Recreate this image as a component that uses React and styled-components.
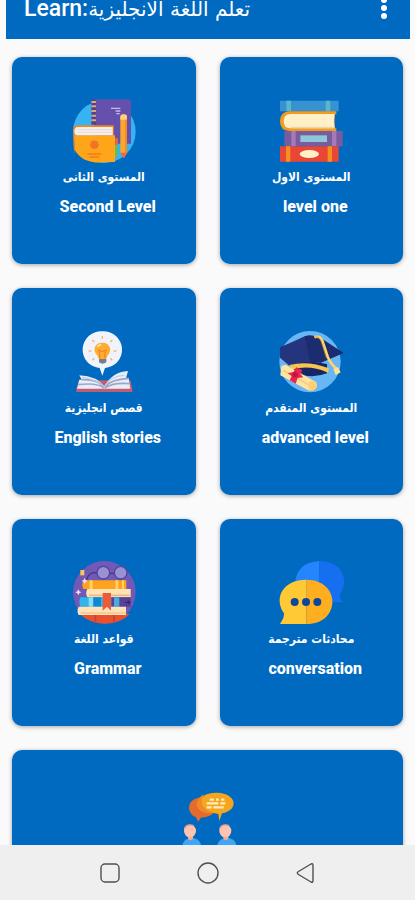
import React from "react";
import styled, { createGlobalStyle } from "styled-components";

const GlobalStyle = createGlobalStyle`
  *, *::before, *::after { box-sizing: border-box; }
  body { margin: 0; background: #fafafa; }
`;

const Screen = styled.div`
  display: flex;
  flex-direction: column;
  height: 100vh;
  overflow: hidden;
  background: #fafafa;
  font-family: Roboto, "DejaVu Sans", sans-serif;
  color: #fff;
`;

const AppBar = styled.header`
  display: flex;
  flex: none;
  align-items: center;
  justify-content: space-between;
  height: 56px;
  margin: -17px 5px 0 6px;
  padding: 0 16px 4px 18px;
  background: #006ac1;
`;

const Title = styled.h1`
  margin: 0;
  font-size: 23px;
  font-weight: 500;
  line-height: 28px;
  white-space: nowrap;
`;

const TitleArabic = styled.span`
  font-family: "DejaVu Sans", sans-serif;
  font-size: 20px;
  font-weight: 400;
`;

const IconButton = styled.button`
  display: flex;
  padding: 0;
  border: 0;
  background: none;
  color: inherit;
  cursor: pointer;
`;

const Content = styled.main`
  flex: 1;
  min-height: 0;
  overflow: hidden;
  padding: 18px 12px 0;
`;

const Grid = styled.div`
  display: grid;
  grid-template-columns: repeat(2, 1fr);
  gap: 24px;
`;

const Card = styled.button`
  display: flex;
  flex-direction: column;
  align-items: center;
  grid-column: ${(p) => (p.$wide ? "1 / -1" : "auto")};
  min-height: 207px;
  padding: 41px 8px 40px;
  border: 0;
  border-radius: 10px;
  background: #006ac1;
  box-shadow: 0 1px 4px rgba(0, 0, 0, 0.35);
  color: inherit;
  font-family: inherit;
  cursor: pointer;
`;

const Picture = styled.svg`
  flex: none;
  width: 64px;
  height: 64px;
  overflow: visible;
`;

const ArabicLabel = styled.span`
  margin-top: 4px;
  font-family: "DejaVu Sans Condensed", "DejaVu Sans", sans-serif;
  font-size: 12px;
  font-weight: 700;
  line-height: 22px;
  white-space: nowrap;
`;

const EnglishLabel = styled.span`
  margin-top: 8px;
  padding-left: 8px;
  font-size: 16px;
  font-weight: 800;
  line-height: 22px;
  white-space: nowrap;
`;

const NavBar = styled.nav`
  display: flex;
  flex: none;
  align-items: center;
  justify-content: center;
  gap: 74px;
  height: 55px;
  background: #efefef;
  color: #505050;
`;

const NavIcon = styled.svg`
  width: 24px;
  height: 24px;
  fill: none;
  stroke: currentColor;
  stroke-width: 1.4;
  stroke-linejoin: round;
`;

function NotebooksPicture() {
  return (
    <Picture viewBox="66 39 192 192" aria-hidden="true">
      <circle cx="163" cy="140" r="94" fill="#36b3f2" />
      <path d="M132 43h104q7 0 7 7v126H132z" fill="#6650ae" />
      <path d="M124 43h14v76h-14z" fill="#51419a" />
      <path d="M124 51h14M124 64h14M124 78h14M124 92h14M124 106h14" stroke="#e0a96e" strokeWidth="6" />
      <path d="M183 70h28M197 78h14M199 86h10" stroke="#c6b8ed" strokeWidth="4" />
      <path d="M188 160h15v58h-15z" fill="#66bc55" />
      <path d="M188 160h15v20h-15z" fill="#ec6142" />
      <path d="M70 134q0-13 14-13h107v30H74v55q-5-18-4-72z" fill="#f58718" />
      <path d="M73 151h122v80h-22Q100 241 74 194z" fill="#ffa519" />
      <path d="M82 126h106v25H82q-9-1-9-12t9-13z" fill="#f5efec" />
      <path d="M82 134h106M82 142h106" stroke="#ddd3d4" strokeWidth="2" />
      <circle cx="133" cy="179" r="12" fill="#f0732a" />
      <path d="M133 165v28M119 179h28M123 169l20 20M143 169l-20 20" stroke="#f0732a" strokeWidth="3" />
      <path d="M112 207h42M118 216h30" stroke="#ef7c21" strokeWidth="4" />
      <path d="M211 96q0-8 10-8t10 8v108l-10 16-10-16z" fill="#fba72e" />
      <path d="M211 96q0-8 10-8t10 8v8h-20z" fill="#ffcf7d" />
      <path d="M225 104h6v100l-6 9z" fill="#ef8d22" />
      <path d="M211 203h20l-10 17z" fill="#f3634b" />
    </Picture>
  );
}

function BookStackPicture() {
  return (
    <Picture viewBox="72 39 192 192" aria-hidden="true">
      <path d="M75 47h176v32H75z" fill="#3692d0" />
      <path d="M94 47h14v32H94zM212 47h14v32h-14z" fill="#5bb5cf" />
      <path d="M104 79h140v9h-5v42h5v8H104q-29 0-29-29t29-30z" fill="#f39b1c" />
      <path d="M106 87h133q-5 22 0 43H106q-20 0-20-21t20-22z" fill="#fff0c8" />
      <path d="M111 130h128v-5H103z" fill="#ead8aa" />
      <path d="M88 138h175v46H88z" fill="#795b9f" />
      <path d="M109 138h13v46h-13zM231 138h13v46h-13z" fill="#a47bb6" />
      <path d="M136 151h80v20h-80z" fill="#8cc8d5" />
      <path d="M75 184h176v46H75z" fill="#e94635" />
      <path d="M93 184h13v46H93zM218 184h13v46h-13z" fill="#f3911e" />
      <ellipse cx="163" cy="207" rx="29" ry="12" fill="#fff0c8" />
    </Picture>
  );
}

function StoriesPicture() {
  return (
    <Picture viewBox="81 27 192 192" aria-hidden="true">
      <path d="M172 34a55 55 0 0 1 8 110l-8 23-8-23a55 55 0 0 1 8-110z" fill="#f0f4fa" />
      <path d="M172 48v8M142 60l6 6M202 60l-6 6M131 93h8M206 93h8M142 121l6-6M202 121l-6-6" stroke="#f6b26d" strokeWidth="4" />
      <path d="M172 68c-25 0-29 24-16 37l6 12h21l6-12c13-13 7-37-17-37z" fill="#ffad2f" />
      <path d="M164 116q3-18-4-26l12 5 12-5q-7 8-4 26" fill="none" stroke="#ed7d20" strokeWidth="3" />
      <path d="M157 81q4-7 12-7" fill="none" stroke="#ffe2a2" strokeWidth="5" />
      <path d="M162 117h22v10q-11 8-22 0z" fill="#747f93" />
      <path d="M94 206l8-25h154l6 25v10H94z" fill="#c05d70" />
      <path d="M103 166q53 3 75 33 24-43 71-46l-6 22h8l5 31H96l7-27h7z" fill="#e8edf7" />
      <path d="M110 179q49-2 68 22 20-23 73-26M100 194q59-7 78 11 25-19 76-14" fill="none" stroke="#9ba8cb" strokeWidth="5" />
      <path d="M112 172q45 7 66 28 21-33 60-34M178 198v9" fill="none" stroke="#c1cadd" strokeWidth="3" />
    </Picture>
  );
}

function GraduationPicture() {
  return (
    <Picture viewBox="87 27 192 192" aria-hidden="true">
      <circle cx="180" cy="125" r="92" fill="#68b6f4" />
      <path d="M113 112l118 20v28q-48 19-97-3z" fill="#172664" />
      <path d="M90 82q43-18 74-33 18-6 44 3l72 47-68 29q-51-6-94 9L90 113z" fill="#25357d" />
      <path d="M164 49q18-6 44 3l72 47-68 29-32-4z" fill="#1c2c70" />
      <path d="M118 135q56-15 119 10l-3 13q-57-25-108-9z" fill="#f8c552" />
      <path d="M193 52q20-8 27 19l13 39q7 20 30 40" fill="none" stroke="#ffd665" strokeWidth="8" />
      <path d="M194 51q16-3 20 15l15 49" fill="none" stroke="#b88c40" strokeWidth="2" />
      <path d="M250 146l14-4 8 15-15 8z" fill="#ffe390" />
      <path d="M94 138l13-4 91 52q9 15-8 25l-13 1-86-46z" fill="#ffe3a1" />
      <path d="M100 151l82 47" stroke="#f6c676" strokeWidth="4" />
      <ellipse cx="187" cy="197" rx="12" ry="15" fill="#ffcf6d" />
      <path d="M139 142l18 8-6 13 9 9-17 2-6 17-18-10 6-13-12-8 17-4z" fill="#e72650" />
      <circle cx="135" cy="164" r="8" fill="#bd183f" />
      <circle cx="154" cy="163" r="3" fill="#ff7284" />
    </Picture>
  );
}

function GrammarPicture() {
  return (
    <Picture viewBox="66 30 192 192" aria-hidden="true">
      <circle cx="163" cy="127" r="94" fill="#7259b6" />
      <path d="M89 192h150q-27 29-73 29t-77-29z" fill="#e9502e" />
      <path d="M136 195v24M192 195v22" stroke="#c84234" strokeWidth="5" />
      <path d="M109 90q12-31 36-19M178 70h16" fill="none" stroke="#423786" strokeWidth="4" />
      <circle cx="160" cy="68" r="19" fill="#9a91d5" stroke="#50449c" strokeWidth="4" />
      <circle cx="212" cy="68" r="19" fill="#9a91d5" stroke="#50449c" strokeWidth="4" />
      <path d="M100 91h129v26H100q-6-13 0-26z" fill="#ffa31e" />
      <path d="M119 91h9v26h-9zM196 91h9v26h-9zM216 91h6v26h-6z" fill="#ffd165" />
      <path d="M112 117h130v25H112q-7-13 0-25z" fill="#ffe3b7" />
      <path d="M117 136h122" stroke="#e9bc7e" strokeWidth="5" />
      <path d="M91 142h105v28H91q-6-14 0-28z" fill="#2eb5ec" />
      <path d="M116 142h14v28h-14z" fill="#8adaf4" />
      <path d="M130 142h23v28h-23z" fill="#0e88d5" />
      <path d="M184 142h58v28h-58z" fill="#554197" />
      <path d="M192 142h16v28h-16z" fill="#4ba9e3" />
      <path d="M226 157h14M234 151l6 6-6 6" fill="none" stroke="#292157" strokeWidth="3" />
      <path d="M86 170h142v25H86q-7-12 0-25z" fill="#ffe3b7" />
      <path d="M91 189h136" stroke="#efc68a" strokeWidth="5" />
      <path d="M158 129h25v53l-12-12-13 12z" fill="#ec5b36" />
      <path d="M91 60h12v16H91z" fill="#ffc45a" />
      <path d="M85 118l3 6 6 3-6 3-3 6-3-6-6-3 6-3zM104 84l3 6 6 3-6 3-3 6-3-6-6-3 6-3z" fill="#f2ddff" />
    </Picture>
  );
}

function ConversationPicture() {
  return (
    <Picture viewBox="72 30 192 192" aria-hidden="true">
      <path d="M193 33v121h-43q-31-22-30-54 5-63 73-67z" fill="#2386ff" />
      <path d="M193 33c73 0 90 63 61 101 0 12 5 18 11 23h-72z" fill="#166ff0" />
      <path d="M154 89c-70 0-99 55-67 101 1 12-5 21-12 32h79z" fill="#ffc936" />
      <path d="M154 89c104 0 104 133 0 133z" fill="#ffae20" />
      <circle cx="119" cy="156" r="12" fill="#0e4799" />
      <circle cx="153" cy="156" r="12" fill="#0e4799" />
      <circle cx="187" cy="156" r="12" fill="#0e4799" />
    </Picture>
  );
}

function DialoguePicture() {
  return (
    <Picture viewBox="78 33 192 192" aria-hidden="true">
      <path d="M166 52c-54-6-62 45-29 59l8 14 7-12q34-2 42-20z" fill="#e56b2c" />
      <path d="M202 38c-65-2-70 50-12 61l15 3 3 21 8-23c53-10 44-60-14-62z" fill="#f5a51e" />
      <path d="M151 50q-27 31 13 48 16 3 25 0-50-15-27-56z" fill="#ef8825" />
      <path d="M179 59h13M198 59h8M213 59h10M170 70h35M211 70h15M170 82h15M190 82h31" stroke="#ffedbd" strokeWidth="7" />
      <path d="M96 205q1-30 29-32 28 2 30 32zM200 205q2-30 31-32 28 2 30 32z" fill="#42a5f3" />
      <path d="M114 164h15v13q-8 7-15 0zM220 164h15v13q-8 7-15 0z" fill="#f6a995" />
      <ellipse cx="120" cy="153" rx="18" ry="19" fill="#ffc3af" />
      <ellipse cx="226" cy="153" rx="18" ry="19" fill="#ffc3af" />
      <path d="M103 147q7-17 28-10M209 147q7-17 28-10" fill="none" stroke="#eea08d" strokeWidth="4" />
    </Picture>
  );
}

const lessons = [
  { arabic: "المستوى الثانى", english: "Second Level", Art: NotebooksPicture },
  { arabic: "المستوى الاول", english: "level one", Art: BookStackPicture },
  { arabic: "قصص انجليزية", english: "English stories", Art: StoriesPicture },
  { arabic: "المستوى المتقدم", english: "advanced level", Art: GraduationPicture },
  { arabic: "قواعد اللغة", english: "Grammar", Art: GrammarPicture },
  { arabic: "محادثات مترجمة", english: "conversation", Art: ConversationPicture },
];

export default function App() {
  return (
    <Screen>
      <GlobalStyle />
      <AppBar>
        <Title>
          Learn:<TitleArabic lang="ar">تعلم اللغة الانجليزية</TitleArabic>
        </Title>
        <IconButton aria-label="More options">
          <svg width="20" height="24" viewBox="0 0 20 24" fill="currentColor" aria-hidden="true">
            <circle cx="10" cy="3" r="3" />
            <circle cx="10" cy="11" r="3" />
            <circle cx="10" cy="19" r="3" />
          </svg>
        </IconButton>
      </AppBar>
      <Content>
        <Grid>
          {lessons.map(({ arabic, english, Art }) => (
            <Card key={english} type="button">
              <Art />
              <ArabicLabel lang="ar" dir="rtl">{arabic}</ArabicLabel>
              <EnglishLabel>{english}</EnglishLabel>
            </Card>
          ))}
          <Card $wide type="button" aria-label="Dialogues">
            <DialoguePicture />
          </Card>
        </Grid>
      </Content>
      <NavBar>
        <IconButton aria-label="Recent apps">
          <NavIcon viewBox="0 0 24 24"><rect x="3" y="3" width="18" height="18" rx="4" /></NavIcon>
        </IconButton>
        <IconButton aria-label="Home">
          <NavIcon viewBox="0 0 24 24"><circle cx="12" cy="12" r="10" /></NavIcon>
        </IconButton>
        <IconButton aria-label="Back">
          <NavIcon viewBox="0 0 24 24"><path d="M17 3 4.500 10.500q-2.500 1.500 0 3L17 21q2 1 2-1.500V4.500Q19 2 17 3z" /></NavIcon>
        </IconButton>
      </NavBar>
    </Screen>
  );
}
